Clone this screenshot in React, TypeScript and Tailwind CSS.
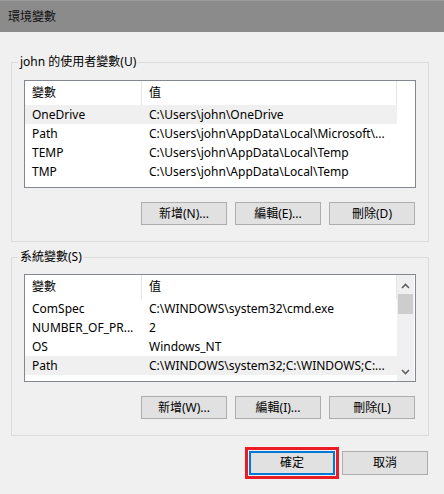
import React from "react";

const FONT = { fontFamily: '"Noto Sans", "Noto Sans CJK TC", sans-serif' };

type Row = { name: string; value: string; selected?: boolean };

const USER_VARS: Row[] = [
  { name: "OneDrive", value: "C:\\Users\\john\\OneDrive", selected: true },
  { name: "Path", value: "C:\\Users\\john\\AppData\\Local\\Microsoft\\..." },
  { name: "TEMP", value: "C:\\Users\\john\\AppData\\Local\\Temp" },
  { name: "TMP", value: "C:\\Users\\john\\AppData\\Local\\Temp" },
];

const SYSTEM_VARS: Row[] = [
  { name: "ComSpec", value: "C:\\WINDOWS\\system32\\cmd.exe" },
  { name: "NUMBER_OF_PR...", value: "2" },
  { name: "OS", value: "Windows_NT" },
  { name: "Path", value: "C:\\WINDOWS\\system32;C:\\WINDOWS;C:...", selected: true },
];

function Chevron({ up }: { up?: boolean }) {
  return (
    <svg width="9" height="6" viewBox="0 0 9 6">
      <path
        d={up ? "M1 5 L4.5 1.5 L8 5" : "M1 1 L4.5 4.5 L8 1"}
        fill="none"
        stroke="#606060"
        strokeWidth="1.6"
      />
    </svg>
  );
}

function VarList({ rows, scroll }: { rows: Row[]; scroll?: boolean }) {
  return (
    <div className="flex w-[392px] h-[108px] border border-[#828790] bg-white overflow-hidden">
      <div className="w-[372px] flex flex-col">
        <div className="flex h-[24px] shrink-0 items-center">
          <div className="w-[117px] h-full flex items-center pl-[7px] border-r border-[#e5e5e5]">變數</div>
          <div className="flex-1 h-full flex items-center pl-[7px] border-r border-[#e5e5e5]">值</div>
        </div>
        {rows.map((r) => (
          <div
            key={r.name}
            className={`flex h-[19px] shrink-0 items-center ${r.selected ? "bg-[#f0f0f0]" : ""}`}
          >
            <div className="w-[117px] pl-[7px] whitespace-nowrap overflow-hidden">{r.name}</div>
            <div className="flex-1 pl-[7px] whitespace-nowrap overflow-hidden">{r.value}</div>
          </div>
        ))}
      </div>
      {scroll && (
        <div className="w-[17px] bg-[#f0f0f0] flex flex-col items-center">
          <div className="h-[17px] flex items-center justify-center shrink-0 mt-[2px]">
            <Chevron up />
          </div>
          <div className="w-[15px] h-[20px] bg-[#cdcdcd]" />
          <div className="flex-1" />
          <div className="h-[17px] flex items-center justify-center shrink-0 mb-[1px]">
            <Chevron />
          </div>
        </div>
      )}
    </div>
  );
}

function Btn({ children }: { children: React.ReactNode }) {
  return (
    <button className="w-[86px] h-[23px] border border-[#adadad] bg-[#e1e1e1] text-[12px] leading-none text-black">
      {children}
    </button>
  );
}

function Group({
  label,
  rows,
  scroll,
  buttons,
  className,
  top,
}: {
  label: string;
  rows: Row[];
  scroll?: boolean;
  buttons: string[];
  className: string;
  top: string;
}) {
  return (
    <fieldset className={`w-[418px] border border-[#dcdcdc] ${className}`}>
      <legend className="ml-[6px] px-[2px] leading-[16px]">{label}</legend>
      <div className={`px-[12px] pb-[16px] ${top}`}>
        <VarList rows={rows} scroll={scroll} />
        <div className="flex justify-end gap-[8px] mt-[14px] pr-[1px]">
          {buttons.map((b) => (
            <Btn key={b}>{b}</Btn>
          ))}
        </div>
      </div>
    </fieldset>
  );
}

export default function App() {
  return (
    <div className="w-[444px] h-[494px] bg-[#f0f0f0] flex flex-col text-[12px] text-black" style={FONT}>
      <div className="h-[32px] shrink-0 bg-[#8b8b8b] border-t border-[#9c9c9c] flex items-center pl-[8px] text-[#111]">
        環境變數
      </div>
      <div className="pl-[11px] flex flex-col">
        <Group
          label="john 的使用者變數(U)"
          rows={USER_VARS}
          buttons={["新增(N)...", "編輯(E)...", "刪除(D)"]}
          className="mt-[22px]"
          top="pt-[10px]"
        />
        <Group
          label="系統變數(S)"
          rows={SYSTEM_VARS}
          scroll
          buttons={["新增(W)...", "編輯(I)...", "刪除(L)"]}
          className="mt-[7px]"
          top="pt-[9px]"
        />
        <div className="w-[418px] flex justify-end items-center gap-[3px] mt-[11px] pr-[1px]">
          <div className="border-[3px] border-[#ed1c24] p-px">
            <button className="w-[86px] h-[24px] border-2 border-[#0078d7] bg-[#e1e1e1] text-[12px] leading-none text-black">
              確定
            </button>
          </div>
          <button className="w-[86px] h-[24px] border border-[#adadad] bg-[#e1e1e1] text-[12px] leading-none text-black">
            取消
          </button>
        </div>
      </div>
    </div>
  );
}
